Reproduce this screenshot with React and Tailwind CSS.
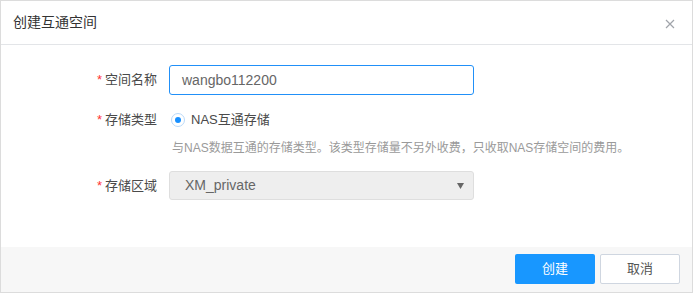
import React from "react";

const font = { fontFamily: '"Liberation Sans", "Noto Sans CJK SC", sans-serif' };

function Label({ children }) {
  return (
    <div className="w-[157px] pr-[1px] text-right text-[13px] text-[#4a4a4a] shrink-0">
      <span className="text-[#f33] mr-[3px]">*</span>
      {children}
    </div>
  );
}

export default function App() {
  return (
    <div style={font} className="w-[693px] h-[293px] bg-white border border-[#dcdcdc] flex flex-col">
      {/* 标题 */}
      <div className="h-[44px] shrink-0 border-b border-[#e3e5e8] flex items-center justify-between pl-[12px] pr-[17px]">
        <span className="text-[14px] text-[#333]">创建互通空间</span>
        <svg width="10" height="10" viewBox="0 0 10 10" className="mt-[2px]">
          <path d="M1 1L9 9M9 1L1 9" stroke="#a0a4aa" strokeWidth="1.2" />
        </svg>
      </div>

      {/* 表单 */}
      <div className="flex-1 pt-[20px] flex flex-col">
        <div className="flex items-center gap-[11px]">
          <Label>空间名称</Label>
          <div className="w-[305px] h-[30px] border border-[#2190f8] rounded-[3px] flex items-center px-[12px] text-[14px] text-[#666]">
            wangbo112200
          </div>
        </div>

        <div className="flex items-center gap-[13px] mt-[10px] h-[30px]">
          <Label>存储类型</Label>
          <div className="flex items-center gap-[6px]">
            <span className="w-[14px] h-[14px] rounded-full border border-[#b9d9f9] flex items-center justify-center">
              <span className="w-[6px] h-[6px] rounded-full bg-[#1890ff]" />
            </span>
            <span className="text-[13px] text-[#4a4a4a]">NAS互通存储</span>
          </div>
        </div>

        <div className="pl-[171px] mt-[5px] text-[12px] text-[#9a9a9a] leading-[16px]">
          与NAS数据互通的存储类型。该类型存储量不另外收费，只收取NAS存储空间的费用。
        </div>

        <div className="flex items-center gap-[11px] mt-[15px]">
          <Label>存储区域</Label>
          <div className="w-[305px] h-[29px] bg-[#eeeeee] border border-[#dedede] rounded-[3px] flex items-center justify-between pl-[15px] pr-[9px] text-[14px] text-[#666]">
            <span>XM_private</span>
            <svg width="7" height="6" viewBox="0 0 7 6">
              <path d="M0 0H7L3.5 6Z" fill="#666" />
            </svg>
          </div>
        </div>
      </div>

      {/* 底部按钮 */}
      <div className="h-[45px] shrink-0 bg-[#f7f7f7] flex items-start justify-end gap-[5px] pt-[7px] pr-[12px]">
        <button className="w-[80px] h-[30px] rounded-[2px] bg-[#1897ff] text-white text-[13px]">创建</button>
        <button className="w-[80px] h-[30px] rounded-[2px] bg-white border border-[#cfd6e0] text-[#555] text-[13px]">取消</button>
      </div>
    </div>
  );
}
